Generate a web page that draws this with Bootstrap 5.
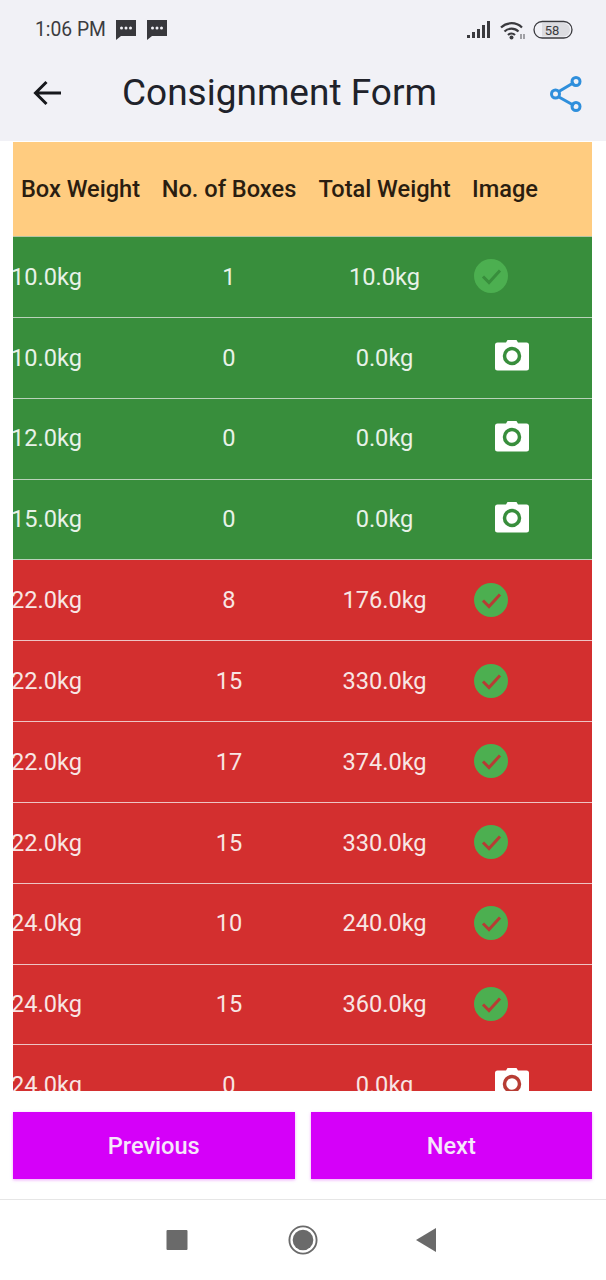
<!DOCTYPE html>
<html lang="en">
<head>
<meta charset="utf-8">
<title>Consignment Form</title>
<link href="https://cdn.jsdelivr.net/npm/bootstrap@5.3.0/dist/css/bootstrap.min.css" rel="stylesheet">
<style>
html,body{height:1280px;overflow:hidden;background:#fff;font-family:Roboto,sans-serif}
.phone{width:606px;height:1280px}
.top-area{height:141px;background:#f1f1f6}
.status-line{height:58px;padding:1px 33px 0 35px;color:#3c3c40;font-size:19.3px}
.clock{margin-top:2px}
.msg-icon{margin-left:9px}
.title-line{height:83px;padding:0 24px 14px 33px}
.share-icon{margin-bottom:-2px}
.page-title{font-size:37px;font-weight:400;color:#20222a;margin:0 0 0 60px;line-height:1}
.sheet{margin:1px 14px 0 13px;height:949px;overflow:hidden}
.grid-row{display:grid;grid-template-columns:135px 162px 149px 133px;align-items:center;text-align:center;color:#e8f2e8;font-size:23.6px;height:80.85px;border-bottom:1.5px solid #b9d2ba;padding-top:1px}
.head-row{height:95px;background:#ffcc80;color:#2a1d10;font-weight:500;border-bottom:1px solid #b9c4a4;font-size:23.6px}
.head-row>div{white-space:nowrap}
.img-head{text-align:left;padding-left:13px}
.ok{background:#388e3c}
.bad{background:#d32f2f;border-bottom-color:#eec4c4;color:#f8e6e4}
.first-cell{text-align:left;margin-left:-2px;white-space:nowrap}
.pic-cell{display:flex;justify-content:flex-start;padding-left:36px;padding-bottom:6px}
.done-cell{padding-left:15px;padding-bottom:2px}
.foot-btns{padding:21px 14px 0 13px;gap:16px}
.foot-btn{flex:1 1 0;height:67px;padding-top:8px;border-radius:0;border:0;background:#d500f9;color:#f6e6fa;font-size:23.6px;font-weight:500;box-shadow:0 1px 3px rgba(213,0,249,.35)}
.foot-btn:hover{background:#d500f9;color:#f6e6fa}
.nav-strip{margin-top:20px;height:81px;border-top:1.5px solid #e6e6e6;gap:98px;padding-right:4px}
.nav-square{margin-right:2px}
</style>
</head>
<body>
<svg width="0" height="0" class="position-absolute">
  <defs>
    <symbol id="cam" viewBox="0 0 34 32"><path fill="#fff" d="M11 3.500 12.500 1h9L23 3.500h8.500A2.500 2.500 0 0 1 34 6v23a2.500 2.500 0 0 1-2.500 2.500h-29A2.500 2.500 0 0 1 0 29V6a2.500 2.500 0 0 1 2.500-2.500z"/></symbol>
    <symbol id="msg" viewBox="0 0 22 22"><path fill="#38383c" d="M1 1h20v16H6l-5 4z"/><circle cx="6.500" cy="9" r="1.500" fill="#f1f1f6"/><circle cx="11" cy="9" r="1.500" fill="#f1f1f6"/><circle cx="15.500" cy="9" r="1.500" fill="#f1f1f6"/></symbol>
  </defs>
</svg>
<div class="phone d-flex flex-column">
  <div class="top-area">
    <div class="status-line d-flex align-items-center">
      <span class="clock">1:06 PM</span>
      <svg class="msg-icon" width="22" height="22"><use href="#msg"/></svg>
      <svg class="msg-icon" width="22" height="22"><use href="#msg"/></svg>
      <svg class="ms-auto" width="106" height="22" viewBox="0 0 106 22">
        <g fill="#3a3a3e"><rect x="0" y="16" width="3" height="3"/><rect x="5" y="13" width="3" height="6"/><rect x="10" y="10" width="3" height="9"/><rect x="15" y="6" width="3" height="13"/><rect x="20" y="2" width="3" height="17"/></g>
        <g fill="none" stroke="#3a3a3e" stroke-width="2.200"><path d="M34 8.500a15 15 0 0 1 21 0"/><path d="M37.500 12.500a10 10 0 0 1 14 0"/><path d="M41 16a5 5 0 0 1 7 0"/></g>
        <circle cx="44.500" cy="18.500" r="2" fill="#3a3a3e"/>
        <path d="M54 15v5M57 15v5" stroke="#77777b" stroke-width="1.300"/>
        <rect x="67" y="2.500" width="38" height="16.500" rx="8.200" fill="#f1f1f6" stroke="#3a3a3e" stroke-width="1.300"/>
        <path d="M75 4h22a6.800 6.800 0 0 1 0 13.500H75z" fill="#dcdce0"/>
        <text x="85" y="15.500" font-family="Roboto,sans-serif" font-size="13" text-anchor="middle" fill="#3a3a3e">58</text>
      </svg>
    </div>
    <div class="title-line d-flex align-items-center">
      <svg width="29" height="26" viewBox="0 0 29 26"><path d="M28 13H3M13.500 2 2.500 13l11 11" fill="none" stroke="#17181c" stroke-width="3"/></svg>
      <h1 class="page-title">Consignment Form</h1>
      <svg class="ms-auto share-icon" width="32" height="36" viewBox="0 0 32 36"><g fill="none" stroke="#2f8fdc" stroke-width="3"><path d="M8 16 24 6.500M8 20.500 24 29.500"/><circle cx="5.500" cy="18" r="4"/><circle cx="26" cy="5.500" r="4"/><circle cx="26" cy="30.500" r="4"/></g></svg>
    </div>
  </div>

  <div class="sheet">
    <div class="grid-row head-row"><div>Box Weight</div><div>No. of Boxes</div><div>Total Weight</div><div class="img-head">Image</div></div>

    <div class="grid-row ok"><div class="first-cell">10.0kg</div><div>1</div><div>10.0kg</div><div class="pic-cell done-cell"><svg width="34" height="34" viewBox="0 0 34 34"><circle cx="17" cy="17" r="17" fill="#4caf50"/><path d="M9 17.500 15 23.500 26 11.500" fill="none" stroke="#388e3c" stroke-width="3"/></svg></div></div>
    <div class="grid-row ok"><div class="first-cell">10.0kg</div><div>0</div><div>0.0kg</div><div class="pic-cell"><svg width="34" height="32" viewBox="0 0 34 32"><use href="#cam"/><circle cx="17" cy="17" r="7.500" fill="none" stroke="#388e3c" stroke-width="3.500"/></svg></div></div>
    <div class="grid-row ok"><div class="first-cell">12.0kg</div><div>0</div><div>0.0kg</div><div class="pic-cell"><svg width="34" height="32" viewBox="0 0 34 32"><use href="#cam"/><circle cx="17" cy="17" r="7.500" fill="none" stroke="#388e3c" stroke-width="3.500"/></svg></div></div>
    <div class="grid-row ok"><div class="first-cell">15.0kg</div><div>0</div><div>0.0kg</div><div class="pic-cell"><svg width="34" height="32" viewBox="0 0 34 32"><use href="#cam"/><circle cx="17" cy="17" r="7.500" fill="none" stroke="#388e3c" stroke-width="3.500"/></svg></div></div>

    <div class="grid-row bad"><div class="first-cell">22.0kg</div><div>8</div><div>176.0kg</div><div class="pic-cell done-cell"><svg width="34" height="34" viewBox="0 0 34 34"><circle cx="17" cy="17" r="17" fill="#4caf50"/><path d="M9 17.500 15 23.500 26 11.500" fill="none" stroke="#b73c34" stroke-width="3"/></svg></div></div>
    <div class="grid-row bad"><div class="first-cell">22.0kg</div><div>15</div><div>330.0kg</div><div class="pic-cell done-cell"><svg width="34" height="34" viewBox="0 0 34 34"><circle cx="17" cy="17" r="17" fill="#4caf50"/><path d="M9 17.500 15 23.500 26 11.500" fill="none" stroke="#b73c34" stroke-width="3"/></svg></div></div>
    <div class="grid-row bad"><div class="first-cell">22.0kg</div><div>17</div><div>374.0kg</div><div class="pic-cell done-cell"><svg width="34" height="34" viewBox="0 0 34 34"><circle cx="17" cy="17" r="17" fill="#4caf50"/><path d="M9 17.500 15 23.500 26 11.500" fill="none" stroke="#b73c34" stroke-width="3"/></svg></div></div>
    <div class="grid-row bad"><div class="first-cell">22.0kg</div><div>15</div><div>330.0kg</div><div class="pic-cell done-cell"><svg width="34" height="34" viewBox="0 0 34 34"><circle cx="17" cy="17" r="17" fill="#4caf50"/><path d="M9 17.500 15 23.500 26 11.500" fill="none" stroke="#b73c34" stroke-width="3"/></svg></div></div>
    <div class="grid-row bad"><div class="first-cell">24.0kg</div><div>10</div><div>240.0kg</div><div class="pic-cell done-cell"><svg width="34" height="34" viewBox="0 0 34 34"><circle cx="17" cy="17" r="17" fill="#4caf50"/><path d="M9 17.500 15 23.500 26 11.500" fill="none" stroke="#b73c34" stroke-width="3"/></svg></div></div>
    <div class="grid-row bad"><div class="first-cell">24.0kg</div><div>15</div><div>360.0kg</div><div class="pic-cell done-cell"><svg width="34" height="34" viewBox="0 0 34 34"><circle cx="17" cy="17" r="17" fill="#4caf50"/><path d="M9 17.500 15 23.500 26 11.500" fill="none" stroke="#b73c34" stroke-width="3"/></svg></div></div>
    <div class="grid-row bad"><div class="first-cell">24.0kg</div><div>0</div><div>0.0kg</div><div class="pic-cell"><svg width="34" height="32" viewBox="0 0 34 32"><use href="#cam"/><circle cx="17" cy="17" r="7.500" fill="none" stroke="#b73c34" stroke-width="3.500"/></svg></div></div>
  </div>

  <div class="foot-btns d-flex">
    <button type="button" class="btn foot-btn">Previous</button>
    <button type="button" class="btn foot-btn">Next</button>
  </div>

  <div class="nav-strip d-flex justify-content-center align-items-center">
    <svg class="nav-square" width="22" height="20" viewBox="0 0 22 20"><rect x="0.500" width="21" height="20" rx="1" fill="#6a6a6a"/></svg>
    <svg width="30" height="30" viewBox="0 0 32 32"><circle cx="16" cy="16" r="14.500" fill="none" stroke="#6a6a6a" stroke-width="2"/><circle cx="16" cy="16" r="11" fill="#6a6a6a"/></svg>
    <svg width="20" height="24" viewBox="0 0 20 24"><path d="M20 0V24L0 12z" fill="#6a6a6a"/></svg>
  </div>
</div>
</body>
</html>
